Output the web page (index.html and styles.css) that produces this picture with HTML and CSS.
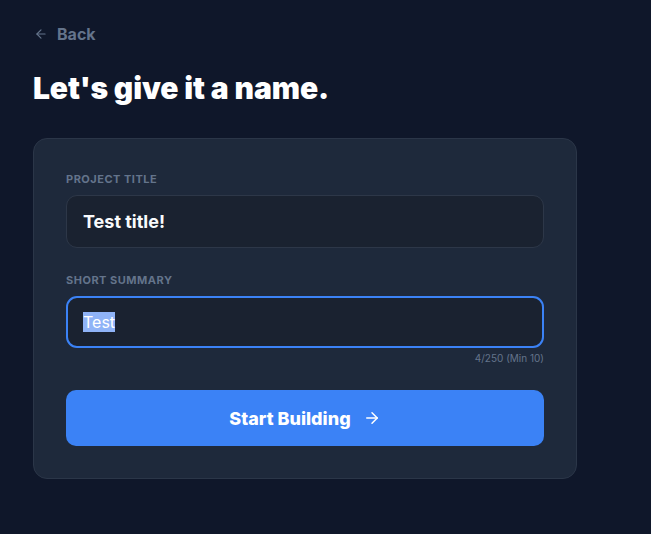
FILE: index.html
```html
<!DOCTYPE html>
<html>
<head>
<meta charset="utf-8">
<link rel="stylesheet" href="styles.css">
</head>
<body>
<main class="page">
  <a class="back" href="#">
    <svg class="back-icon" viewBox="0 0 24 24" fill="none" stroke="currentColor" stroke-width="2" stroke-linecap="round" stroke-linejoin="round"><path d="M19 12H5"/><path d="M12 19l-7-7 7-7"/></svg>
    <span>Back</span>
  </a>
  <h1 class="title">Let's give it a name.</h1>
  <section class="card">
    <div class="field">
      <div class="label">Project Title</div>
      <div class="input input-title">Test title!</div>
    </div>
    <div class="field field-summary">
      <div class="label">Short Summary</div>
      <div class="input input-focus"><span class="selected">Test</span></div>
      <div class="counter">4/250 (Min 10)</div>
    </div>
    <button class="cta">
      <span>Start Building</span>
      <svg class="cta-icon" viewBox="0 0 24 24" fill="none" stroke="currentColor" stroke-width="2" stroke-linecap="round" stroke-linejoin="round"><path d="M5 12h14"/><path d="M12 5l7 7-7 7"/></svg>
    </button>
  </section>
</main>
</body>
</html>
```
FILE: styles.css
```css
* { box-sizing: border-box; }
html, body { margin: 0; padding: 0; }
body {
  background: #0f172a;
  font-family: Inter, "Liberation Sans", sans-serif;
  color: #fff;
  min-height: 534px;
}
.page {
  padding: 24px 33px;
  display: flex;
  flex-direction: column;
  align-items: flex-start;
}
.back {
  display: flex;
  align-items: center;
  gap: 9px;
  color: #64748b;
  text-decoration: none;
  font-size: 16px;
  font-weight: 700;
  line-height: 20px;
  margin-left: 1px;
}
.back-icon { width: 14px; height: 14px; }
.title {
  margin: 26px 0 0 0;
  font-size: 30px;
  font-weight: 900;
  line-height: 36px;
  letter-spacing: -0.1px;
}
.card {
  margin-top: 32px;
  width: 544px;
  background: #1e293b;
  border: 1px solid #2b3648;
  border-radius: 14px;
  padding: 32px;
  display: flex;
  flex-direction: column;
}
.field { display: flex; flex-direction: column; }
.field-summary { margin-top: 24px; }
.label {
  font-size: 11px;
  font-weight: 700;
  line-height: 16px;
  text-transform: uppercase;
  color: #64748b;
  letter-spacing: 0.5px;
  margin-bottom: 8px;
}
.input {
  height: 53px;
  background: #1a2230;
  border: 1px solid #2d3748;
  border-radius: 11px;
  padding: 0 16px;
  display: flex;
  align-items: center;
}
.input-title {
  font-size: 18px;
  font-weight: 700;
  color: #f8fafc;
}
.input-focus {
  height: 52px;
  border: 2px solid #3b82f6;
  padding: 0 15px;
  font-size: 16px;
  font-weight: 400;
  color: #fff;
}
.selected {
  background: #8fb3f7;
  line-height: 20px;
}
.counter {
  margin-top: 4px;
  text-align: right;
  font-size: 10px;
  line-height: 12px;
  color: #64748b;
}
.cta {
  margin-top: 26px;
  height: 56px;
  border: none;
  border-radius: 10px;
  background: #3b82f6;
  color: #fff;
  font-family: inherit;
  font-size: 18px;
  font-weight: 800;
  display: flex;
  align-items: center;
  justify-content: center;
  gap: 12px;
}
.cta-icon { width: 18px; height: 18px; }
```
